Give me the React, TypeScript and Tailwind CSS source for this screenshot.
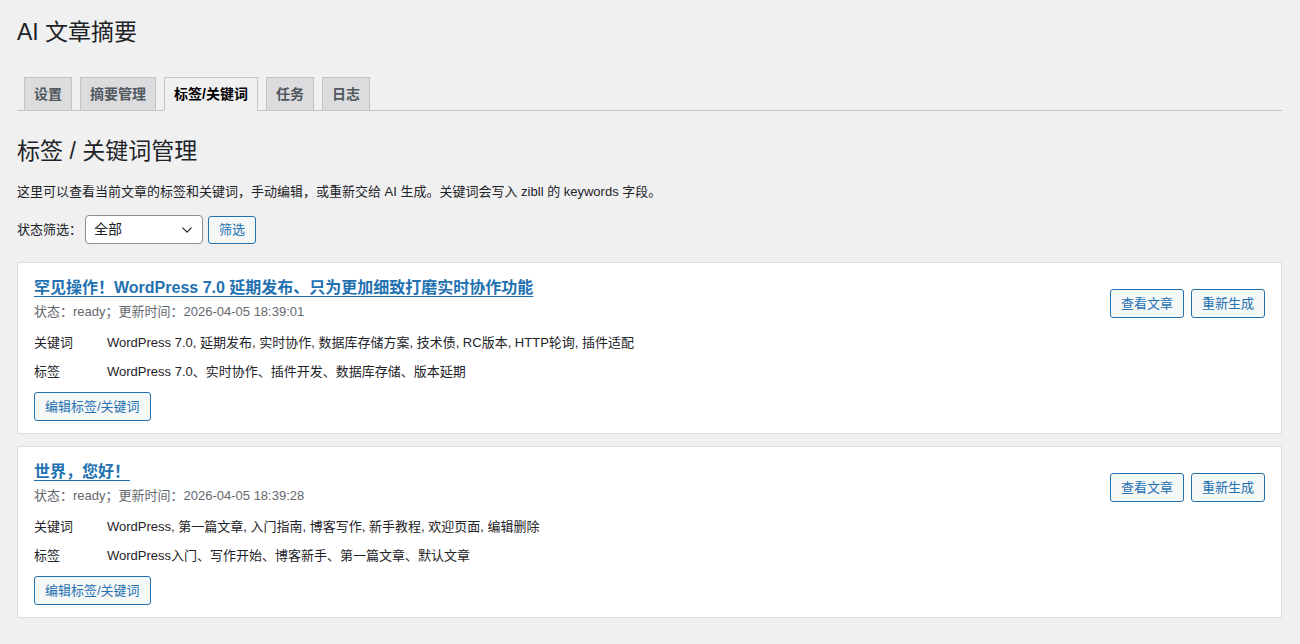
import React from "react";

// Tabs of the plugin page
const tabs = [
  { label: "设置", active: false },
  { label: "摘要管理", active: false },
  { label: "标签/关键词", active: true },
  { label: "任务", active: false },
  { label: "日志", active: false },
];

type Post = {
  title: string;
  updated: string;
  keywords: string;
  tags: string;
};

const posts: Post[] = [
  {
    title: "罕见操作！WordPress 7.0 延期发布、只为更加细致打磨实时协作功能",
    updated: "2026-04-05 18:39:01",
    keywords: "WordPress 7.0, 延期发布, 实时协作, 数据库存储方案, 技术债, RC版本, HTTP轮询, 插件适配",
    tags: "WordPress 7.0、实时协作、插件开发、数据库存储、版本延期",
  },
  {
    title: "世界，您好！",
    updated: "2026-04-05 18:39:28",
    keywords: "WordPress, 第一篇文章, 入门指南, 博客写作, 新手教程, 欢迎页面, 编辑删除",
    tags: "WordPress入门、写作开始、博客新手、第一篇文章、默认文章",
  },
];

function SecondaryButton({ children }: { children: React.ReactNode }) {
  return (
    <button
      type="button"
      className="h-[29px] px-[10px] border border-[#2271b1] rounded-[3px] bg-[#f6f7f7] text-[#2271b1] text-[13px] leading-[27px] whitespace-nowrap"
    >
      {children}
    </button>
  );
}

function PostCard({ post }: { post: Post }) {
  return (
    <div className="bg-white border border-[#dcdcde] pt-[13px] pb-[12px] pl-[16px] pr-[16px]">
      <div className="flex items-start justify-between">
        <div>
          <a href="#" className="text-[16px] leading-[24px] font-semibold text-[#2271b1] underline underline-offset-[3px]">
            {post.title}
          </a>
          <div className="mt-[2px] text-[13px] leading-[20px] text-[#646970]">
            状态：ready；更新时间：{post.updated}
          </div>
        </div>
        <div className="flex gap-[7px] mt-[13px]">
          <SecondaryButton>查看文章</SecondaryButton>
          <SecondaryButton>重新生成</SecondaryButton>
        </div>
      </div>

      <div className="mt-[11px] flex text-[13px] leading-[20px] text-[#1d2327]">
        <div className="w-[73px] shrink-0">关键词</div>
        <div>{post.keywords}</div>
      </div>
      <div className="mt-[9px] flex text-[13px] leading-[20px] text-[#1d2327]">
        <div className="w-[73px] shrink-0">标签</div>
        <div>{post.tags}</div>
      </div>

      <div className="mt-[10px]">
        <SecondaryButton>编辑标签/关键词</SecondaryButton>
      </div>
    </div>
  );
}

export default function App() {
  return (
    <div className="min-h-screen bg-[#f0f0f1] text-[#1d2327] font-['Liberation_Sans','Noto_Sans_CJK_SC',sans-serif]">
      <div className="pl-[17px] pr-[18px] pt-[18px] pb-[20px]">
        <h1 className="text-[23px] leading-[29px] font-normal">AI 文章摘要</h1>

        {/* Tabs */}
        <nav className="mt-[30px] flex items-end border-b border-[#c3c4c7] pl-[7px] gap-[8px]">
          {tabs.map((tab) => (
            <a
              key={tab.label}
              href="#"
              className={
                tab.active
                  ? "-mb-px px-[9px] py-[5px] border border-[#c3c4c7] border-b-[#f0f0f1] bg-[#f0f0f1] text-[14px] leading-[22px] font-semibold text-black"
                  : "-mb-px px-[9px] py-[5px] border border-[#c3c4c7] bg-[#dcdcde] text-[14px] leading-[22px] font-semibold text-[#50575e]"
              }
            >
              {tab.label}
            </a>
          ))}
        </nav>

        <h2 className="mt-[26px] text-[23px] leading-[29px] font-normal">标签 / 关键词管理</h2>
        <p className="mt-[16px] text-[13px] leading-[19px]">
          这里可以查看当前文章的标签和关键词，手动编辑，或重新交给 AI 生成。关键词会写入 zibll 的 keywords 字段。
        </p>

        {/* Filter */}
        <div className="mt-[14px] flex items-center text-[13px]">
          <span className="w-[68px]">状态筛选：</span>
          <div className="w-[118px] h-[29px] flex items-center justify-between pl-[8px] pr-[8px] bg-white border border-[#8c8f94] rounded-[4px] text-[14px]">
            <span>全部</span>
            <svg width="14" height="14" viewBox="0 0 20 20" fill="none" stroke="#1d2327" strokeWidth="1.8" strokeLinecap="round" strokeLinejoin="round">
              <path d="M4 7l6 6 6-6" />
            </svg>
          </div>
          <button
            type="button"
            className="ml-[5px] h-[28px] px-[10px] border border-[#2271b1] rounded-[3px] bg-[#f6f7f7] text-[#2271b1] text-[13px] leading-[26px]"
          >
            筛选
          </button>
        </div>

        {/* Posts */}
        <div className="mt-[18px] flex flex-col gap-[12px]">
          {posts.map((post) => (
            <PostCard key={post.title} post={post} />
          ))}
        </div>
      </div>
    </div>
  );
}
